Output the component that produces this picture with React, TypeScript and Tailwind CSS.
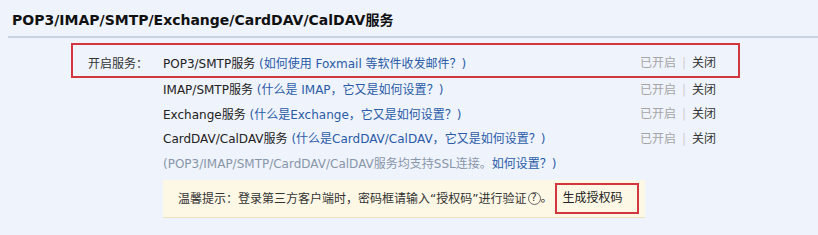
import React from 'react';

const font = { fontFamily: '"DejaVu Sans", "Noto Sans CJK SC", sans-serif' };

interface Service {
  name: string;
  help: React.ReactNode;
}

const services: Service[] = [
  {
    name: 'IMAP/SMTP服务',
    help: <>(什么是 IMAP<Cjk>，</Cjk>它又是如何设置<Cjk>？</Cjk>)</>,
  },
  {
    name: 'Exchange服务',
    help: <>(什么是Exchange<Cjk>，</Cjk>它又是如何设置<Cjk>？</Cjk>)</>,
  },
  {
    name: 'CardDAV/CalDAV服务',
    help: <>(什么是CardDAV/CalDAV<Cjk>，</Cjk>它又是如何设置<Cjk>？</Cjk>)</>,
  },
];

// full-width punctuation needs the CJK font, DejaVu draws it narrow
function Cjk({ children }: { children: React.ReactNode }) {
  return <span className="font-['Noto_Sans_CJK_SC']">{children}</span>;
}

function Status() {
  return (
    <div className="flex items-center w-[100px] shrink-0">
      <span className="text-[#a5a5a5]">已开启</span>
      <span className="mx-[6px] text-[#d0d0d0]">|</span>
      <a className="text-[#333]">关闭</a>
    </div>
  );
}

function Row({ label, children, status = true }: { label?: string; children: React.ReactNode; status?: boolean }) {
  return (
    <div className="flex items-center h-[24.5px]">
      <div className="w-[92px] shrink-0 pl-[17px] text-[#333]">
        <Cjk>{label}</Cjk>
      </div>
      <div className="flex-1 whitespace-nowrap">{children}</div>
      {status && <Status />}
    </div>
  );
}

export default function App() {
  return (
    <div className="w-[818px] h-[235px] bg-[#eff3fb] overflow-hidden text-[12px] text-[#222]" style={font}>
      <div className="h-[38px] ml-2 border-b-2 border-[#c9d4e0] flex items-end pb-[5px]">
        <h1 className="pl-1 text-[14px] font-bold text-[#111]">POP3/IMAP/SMTP/Exchange/CardDAV/CalDAV服务</h1>
      </div>

      <div className="ml-[71px] w-[669px] mt-[5px]">
        <div className="border-2 border-[#d2363e] pt-[6px]">
          <div className="-ml-[2px] -mr-[2px]">
            <Row label="开启服务：">
              POP3/SMTP服务{' '}
              <span className="text-[#2a5ba8]">
                (如何使用 Foxmail 等软件收发邮件<Cjk>？</Cjk>)
              </span>
            </Row>
          </div>
        </div>
        {services.map((s) => (
          <Row key={s.name}>
            {s.name} <span className="text-[#2a5ba8]">{s.help}</span>
          </Row>
        ))}
        <Row status={false}>
          <span className="text-[#8896aa]">(POP3/IMAP/SMTP/CardDAV/CalDAV服务均支持SSL连接。</span>
          <span className="text-[#2a5ba8]">
            如何设置<Cjk>？</Cjk>)
          </span>
        </Row>

        <div className="ml-[92px] mt-[4px] w-[482px] h-[38px] bg-[#fdf8e5] border-b border-[#efe3bf] flex items-center pl-[15px] text-[#333] whitespace-nowrap">
          <span>
            温馨提示<Cjk>：</Cjk>登录第三方客户端时<Cjk>，</Cjk>密码框请输入“授权码”进行验证
          </span>
          <span className="inline-flex items-center justify-center w-[13px] h-[13px] rounded-full border border-[#666] text-[10px] leading-none ml-[1px]">
            ?
          </span>
          <span>。</span>
          <span className="ml-[2px] border-2 border-[#d2363e] h-[31px] w-[84px] flex items-center pl-[6px] text-[#222]">
            生成授权码
          </span>
        </div>
      </div>
    </div>
  );
}
